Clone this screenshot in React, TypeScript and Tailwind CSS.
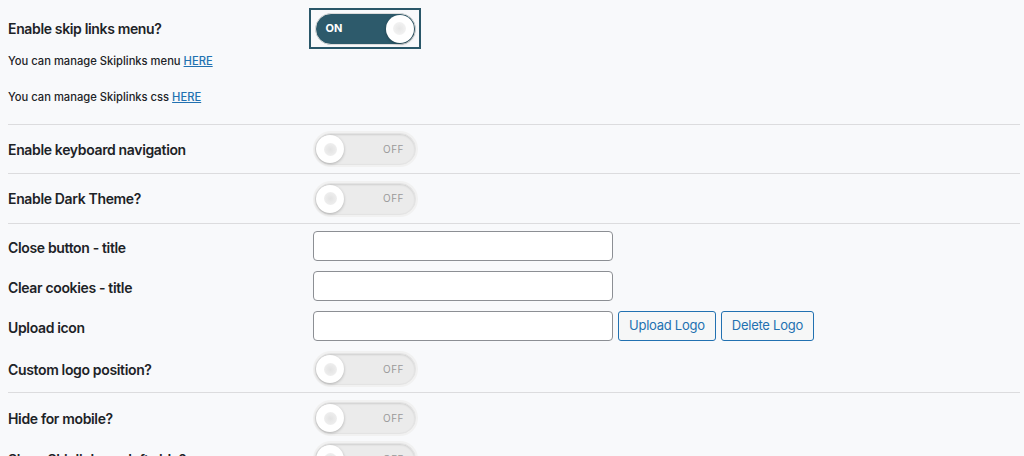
import React from "react";

const font = { fontFamily: "Inter, 'Noto Sans', sans-serif" };

function OffToggle() {
  return (
    <div className="ml-[2px] h-[32px] w-[101px] rounded-full bg-[#ebebeb] ring-2 ring-[#f1f1f1] shadow-[inset_0_1px_2px_rgba(0,0,0,0.12)] border border-[#e3e3e3] flex items-center justify-between pl-[0px] pr-[11px]">
      <span className="h-[28px] w-[28px] rounded-full bg-white shadow-[0_1px_3px_rgba(0,0,0,0.25)] flex items-center justify-center">
        <span className="h-[13px] w-[13px] rounded-full bg-[radial-gradient(circle,#e2e2e2_0%,#eeeeee_70%,#fbfbfb_100%)]" />
      </span>
      <span className="text-[10px] tracking-[0.5px] text-[#9a9a9a]">OFF</span>
    </div>
  );
}

function OnToggle() {
  return (
    <div className="-ml-[4px] h-[41px] w-[112px] border-2 border-[#2a5769] flex items-center justify-center">
      <div className="h-[32px] w-[101px] rounded-full bg-[#2d5a6b] border border-[#dcdcdc] flex items-center justify-between pl-[10px] pr-[1px]">
        <span className="text-[11px] font-bold text-white">ON</span>
        <span className="h-[28px] w-[28px] rounded-full bg-white shadow-[0_1px_3px_rgba(0,0,0,0.3)] flex items-center justify-center">
          <span className="h-[13px] w-[13px] rounded-full bg-[radial-gradient(circle,#e6e6e6_0%,#f2f2f2_70%,#ffffff_100%)]" />
        </span>
      </div>
    </div>
  );
}

function Label({ children, shift }: { children: React.ReactNode; shift?: boolean }) {
  return (
    <div
      className={
        shift
          ? "w-[305px] shrink-0 whitespace-nowrap pt-[3px] text-[14px] font-semibold tracking-[-0.35px] text-[#1d2327]"
          : "w-[305px] shrink-0 whitespace-nowrap text-[14px] font-semibold tracking-[-0.35px] text-[#1d2327]"
      }
    >
      {children}
    </div>
  );
}

function Divider() {
  return <div className="h-px bg-[#dcdcde] mr-[4px]" />;
}

function Input() {
  return <input type="text" className="h-[30px] w-[300px] rounded-[4px] border border-[#8c8f94] bg-white px-2 text-[14px] outline-none" />;
}

function Btn({ children }: { children: React.ReactNode }) {
  return (
    <button className="h-[30px] rounded-[3px] border border-[#2271b1] bg-[#f6f7f7] px-[10px] text-[13px] tracking-[-0.25px] text-[#2271b1]">
      {children}
    </button>
  );
}

export default function App() {
  return (
    <div style={font} className="h-[456px] w-[1024px] overflow-hidden bg-[#f8f9fb] pl-[8px]">
      <div className="pt-[8px]">
        <div className="flex items-center h-[41px]">
          <Label>Enable skip links menu?</Label>
          <OnToggle />
        </div>
        <p className="mt-[2px] text-[11.2px] font-medium leading-[20px] text-[#1d2327]">
          You can manage Skiplinks menu <a href="#" className="text-[#2271b1] underline">HERE</a>
        </p>
        <p className="mt-[16px] mb-[17px] text-[11.2px] font-medium leading-[20px] text-[#1d2327]">
          You can manage Skiplinks css <a href="#" className="text-[#2271b1] underline">HERE</a>
        </p>
      </div>
      <Divider />
      <div className="flex items-center h-[48px]">
        <Label>Enable keyboard navigation</Label>
        <OffToggle />
      </div>
      <Divider />
      <div className="flex items-center h-[49px]">
        <Label>Enable Dark Theme?</Label>
        <OffToggle />
      </div>
      <Divider />
      <div className="pt-[2px]">
        <div className="flex items-center h-[40px]">
          <Label shift>Close button - title</Label>
          <Input />
        </div>
        <div className="flex items-center h-[40px]">
          <Label shift>Clear cookies - title</Label>
          <Input />
        </div>
        <div className="flex items-center h-[40px] gap-[5px]">
          <Label shift>Upload icon</Label>
          <div className="-ml-[5px]"><Input /></div>
          <Btn>Upload Logo</Btn>
          <Btn>Delete Logo</Btn>
        </div>
        <div className="flex items-center h-[46px]">
          <Label>Custom logo position?</Label>
          <OffToggle />
        </div>
      </div>
      <Divider />
      <div className="flex items-center h-[50px]">
        <Label>Hide for mobile?</Label>
        <OffToggle />
      </div>
      <div className="flex items-center h-[32px]">
        <Label>Show Skiplinks on left side?</Label>
        <OffToggle />
      </div>
    </div>
  );
}
